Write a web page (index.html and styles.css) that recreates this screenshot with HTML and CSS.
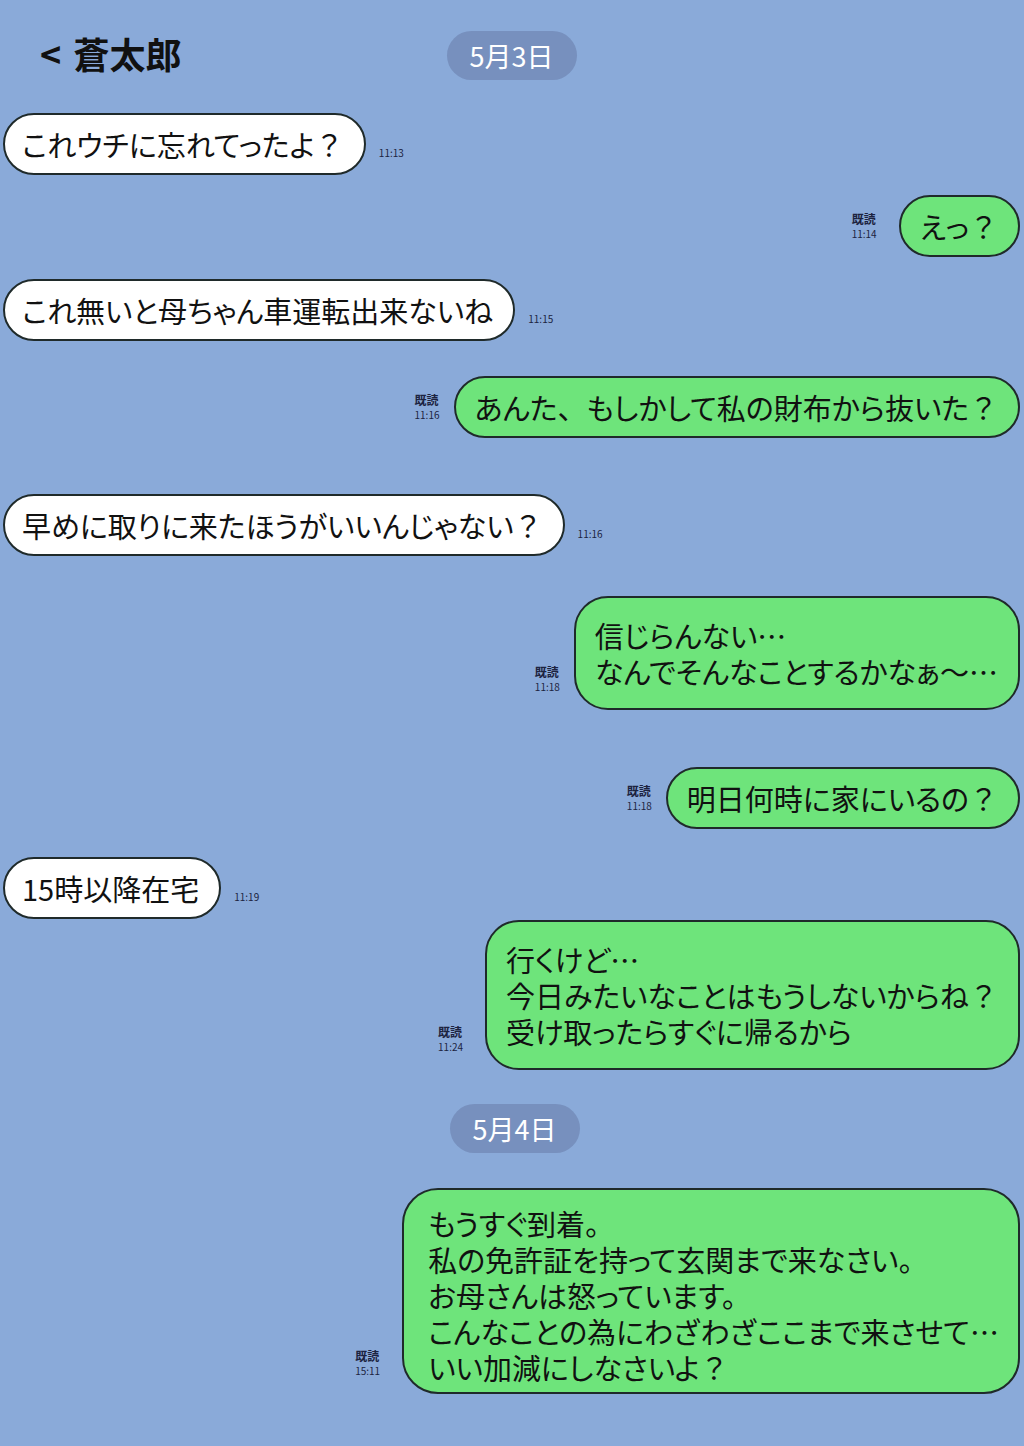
FILE: index.html
```
<!DOCTYPE html>
<html lang="ja">
<head>
    <meta charset="UTF-8">
    <meta name="viewport" content="width=device-width, initial-scale=1.0">
    <title>蒼太郎</title>
    <link rel="stylesheet" href="styles.css">
</head>
<body>
    <div class="chat">
        <!-- ヘッダー -->
        <div class="header">
            <div class="title">&lt; 蒼太郎</div>
            <div class="date">5月3日</div>
            <div></div>
        </div>

        <div class="row left gap-33">
            <div class="bubble">これウチに忘れてったよ<span class="wide-mark">？</span></div>
            <span class="time">11:13</span>
        </div>

        <div class="row right gap-20">
            <div class="read wide"><b>既読</b><br>11:14</div>
            <div class="bubble mine">えっ<span class="wide-mark">？</span></div>
        </div>

        <div class="row left gap-22">
            <div class="bubble">これ無いと母ちゃん車運転出来ないね</div>
            <span class="time">11:15</span>
        </div>

        <div class="row right gap-35">
            <div class="read"><b>既読</b><br>11:16</div>
            <div class="bubble mine">あんた<span class="wide-mark">、</span>もしかして私の財布から抜いた<span class="wide-mark">？</span></div>
        </div>

        <div class="row left gap-56">
            <div class="bubble">早めに取りに来たほうがいいんじゃない<span class="wide-mark">？</span></div>
            <span class="time">11:16</span>
        </div>

        <div class="row right gap-40">
            <div class="read"><b>既読</b><br>11:18</div>
            <div class="bubble mine multi">信じらんない…<br>なんでそんなことするかなぁ～…</div>
        </div>

        <div class="row right gap-57">
            <div class="read"><b>既読</b><br>11:18</div>
            <div class="bubble mine">明日何時に家にいるの<span class="wide-mark">？</span></div>
        </div>

        <div class="row left gap-28">
            <div class="bubble">15時以降在宅</div>
            <span class="time">11:19</span>
        </div>

        <div class="row right gap-1">
            <div class="read wide"><b>既読</b><br>11:24</div>
            <div class="bubble mine multi">行くけど…<br>今日みたいなことはもうしないからね<span class="wide-mark">？</span><br>受け取ったらすぐに帰るから</div>
        </div>

        <div class="day gap-34">
            <div class="date">5月4日</div>
        </div>

        <div class="row right gap-35">
            <div class="read wide"><b>既読</b><br>15:11</div>
            <div class="bubble mine long">もうすぐ到着。<br>私の免許証を持って玄関まで来なさい。<br>お母さんは怒っています。<br>こんなことの為にわざわざここまで来させて…<br>いい加減にしなさいよ<span class="wide-mark">？</span></div>
        </div>
    </div>
</body>
</html>
```

FILE: styles.css
```
body {
    margin: 0;
    padding: 0;
    background-color: #8aaad9;
    font-family: "Noto Sans CJK JP", sans-serif;
    color: #111;
}

.chat {
    padding: 31px 4px 40px 3px;
}

.header {
    display: grid;
    grid-template-columns: 1fr auto 1fr;
    align-items: center;
    height: 49px;
}

.title {
    padding: 0 0 6px 37px;
    font-size: 36px;
    font-weight: bold;
    line-height: 42px;
    word-spacing: 4px;
}

.date {
    width: 130px;
    height: 49px;
    border-radius: 25px;
    background-color: #7790be;
    color: #fff;
    font-size: 27px;
    line-height: 49px;
    text-align: center;
}

.day {
    display: flex;
    justify-content: center;
    padding-left: 6px;
}

.row {
    display: flex;
}

.row.right {
    justify-content: flex-end;
}

.bubble {
    background-color: #fff;
    border: 2px solid #1f2a2a;
    border-radius: 31px;
    padding: 11px 20px 11px 17px;
    font-size: 29px;
    font-feature-settings: "palt";
    line-height: 36px;
    white-space: nowrap;
}

/* 全角のままにする記号 */
.wide-mark {
    font-feature-settings: normal;
}

.bubble.mine {
    background-color: #6ee47b;
    padding: 11px 20px 11px 19px;
}

.bubble.multi {
    padding-top: 19px;
    padding-bottom: 19px;
    border-radius: 34px;
}

.bubble.long {
    padding: 15px 19px 7px 24px;
    border-radius: 36px;
}

.time {
    align-self: flex-end;
    margin: 0 0 15px 13px;
    font-size: 10px;
    color: #1c2340;
}

.read {
    align-self: flex-end;
    margin: 0 14px 16px 0;
    font-size: 10px;
    line-height: 14px;
    color: #1c2340;
}

.read.wide {
    margin-right: 22px;
}

.read b {
    font-size: 12px;
}

.gap-1 { margin-top: 1px; }
.gap-20 { margin-top: 20px; }
.gap-22 { margin-top: 22px; }
.gap-28 { margin-top: 28px; }
.gap-33 { margin-top: 33px; }
.gap-34 { margin-top: 34px; }
.gap-35 { margin-top: 35px; }
.gap-40 { margin-top: 40px; }
.gap-56 { margin-top: 56px; }
.gap-57 { margin-top: 57px; }
```
